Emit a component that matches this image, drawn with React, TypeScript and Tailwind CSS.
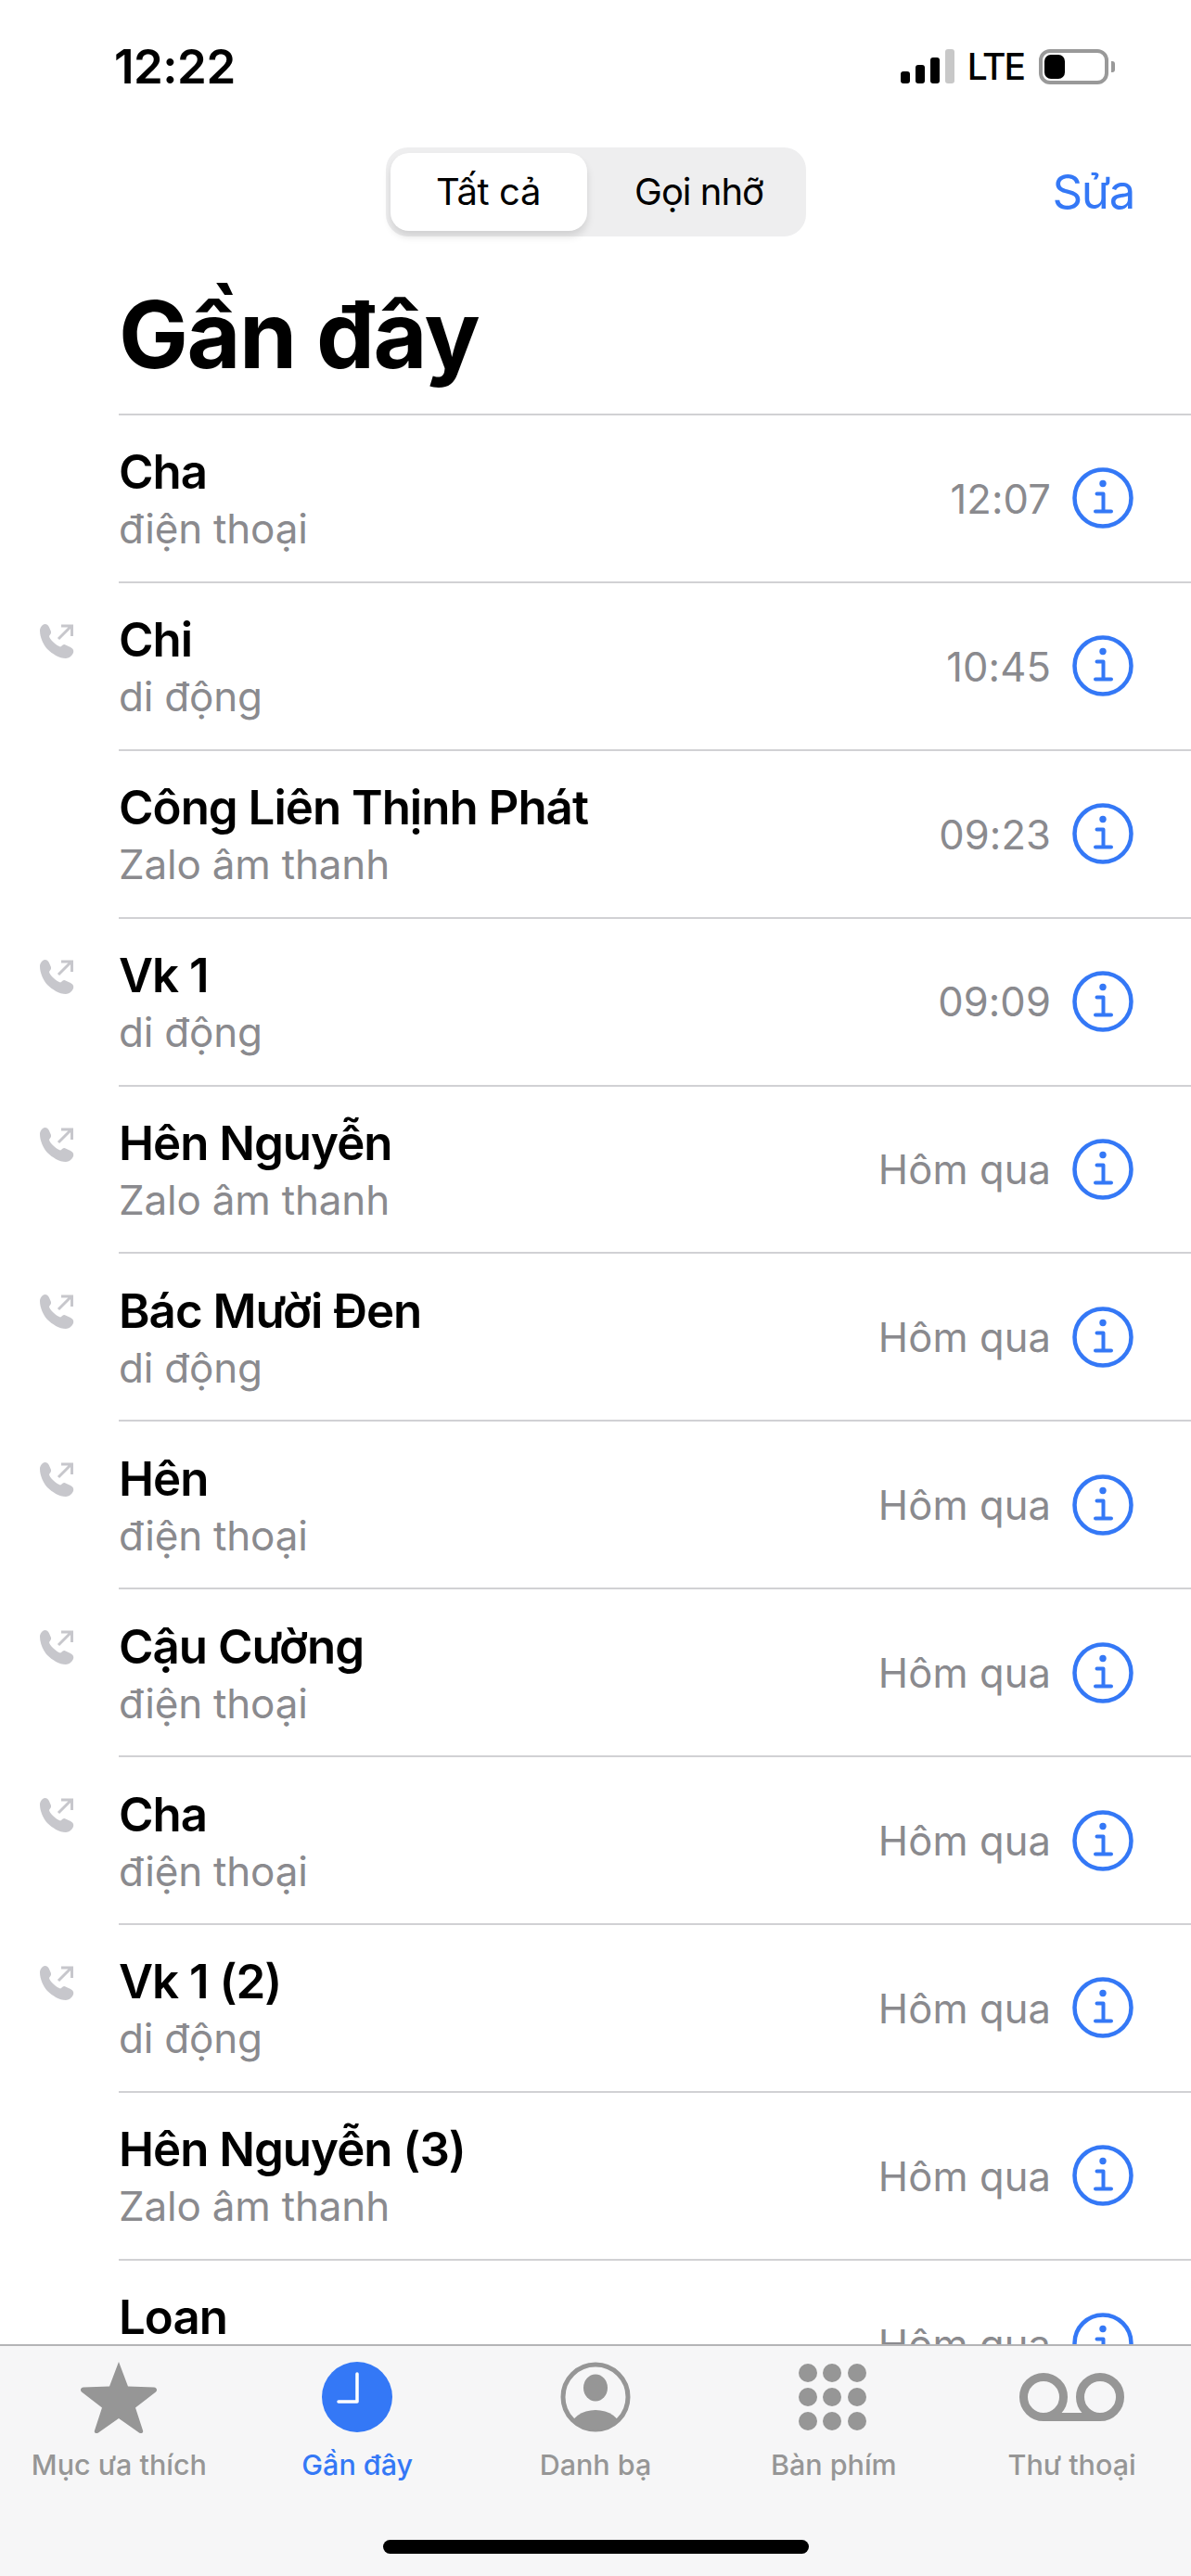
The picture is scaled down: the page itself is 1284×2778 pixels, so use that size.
import React from 'react';

const calls = [
  { name: 'Cha', type: 'điện thoại', when: '12:07', out: false },
  { name: 'Chi', type: 'di động', when: '10:45', out: true },
  { name: 'Công Liên Thịnh Phát', type: 'Zalo âm thanh', when: '09:23', out: false },
  { name: 'Vk 1', type: 'di động', when: '09:09', out: true },
  { name: 'Hên Nguyễn', type: 'Zalo âm thanh', when: 'Hôm qua', out: true },
  { name: 'Bác Mười Đen', type: 'di động', when: 'Hôm qua', out: true },
  { name: 'Hên', type: 'điện thoại', when: 'Hôm qua', out: true },
  { name: 'Cậu Cường', type: 'điện thoại', when: 'Hôm qua', out: true },
  { name: 'Cha', type: 'điện thoại', when: 'Hôm qua', out: true },
  { name: 'Vk 1 (2)', type: 'di động', when: 'Hôm qua', out: true },
  { name: 'Hên Nguyễn (3)', type: 'Zalo âm thanh', when: 'Hôm qua', out: false },
  { name: 'Loan', type: 'di động', when: 'Hôm qua', out: false },
];

function OutgoingIcon() {
  return (
    <svg width="38" height="38" viewBox="0 0 38 38" fill="none">
      <path
        d="M1 8C1 5 3.500 1 6.500 1C8.500 1 9.800 2 10.800 4L13 9C13.500 11 12 12.500 11 14C11 15.500 13 18 15.500 20.500C18 23 21 25 23 25.500C24.500 25 25.500 23 27.500 23L33 25.500C36 27 38 28.500 37 32C36 35 32 38 29 38C22 38 14 33 9 28C4.500 23 1 15 1 8Z"
        fill="#c7c7cc"
      />
      <path d="M21 17L35 3M24 3H35.500V14" stroke="#c7c7cc" strokeWidth="3" />
    </svg>
  );
}

function InfoIcon() {
  return (
    <svg width="66" height="66" viewBox="0 0 66 66" fill="none" className="shrink-0">
      <circle cx="33" cy="33" r="30.500" stroke="#3478f6" strokeWidth="4.500" />
      <circle cx="33" cy="17.500" r="3.700" fill="#3478f6" />
      <path d="M26.500 28.500H33.500V47.500M25 47.500H42" stroke="#3478f6" strokeWidth="4" strokeLinecap="round" strokeLinejoin="round" />
    </svg>
  );
}

function StarIcon() {
  return (
    <svg width="84" height="78" viewBox="0 0 84 78">
      <path
        d="M42 1L52 27.500L80 28.500C83 28.800 84 31.500 82 33.500L60 50.500L68 75C69 78 66 79 64 77.500L42 62L20 77.500C18 79 15 78 16 75L24 50.500L2 33.500C0 31.500 1 28.800 4 28.500L32 27.500Z"
        fill="#969696"
      />
    </svg>
  );
}

function ClockIcon() {
  return (
    <svg width="76" height="76" viewBox="0 0 76 76">
      <circle cx="38" cy="38" r="38" fill="#3478f6" />
      <path d="M38 13V43H18" fill="none" stroke="#fff" strokeWidth="3.500" strokeLinejoin="round" strokeLinecap="round" />
    </svg>
  );
}

function ContactIcon() {
  return (
    <svg width="76" height="76" viewBox="0 0 76 76">
      <defs>
        <clipPath id="contact-clip">
          <circle cx="38" cy="38" r="36" />
        </clipPath>
      </defs>
      <circle cx="38" cy="38" r="35" fill="none" stroke="#969696" strokeWidth="5" />
      <ellipse cx="38" cy="28" rx="13" ry="14.500" fill="#969696" />
      <ellipse cx="38" cy="72" rx="27" ry="20" fill="#969696" clipPath="url(#contact-clip)" />
    </svg>
  );
}

function KeypadIcon() {
  return (
    <div className="grid grid-cols-3 gap-[6px] w-[74px] -ml-[2px]">
      {Array.from({ length: 9 }, (_, i) => (
        <div key={i} className="w-[20px] h-[20px] rounded-full bg-[#969696]" />
      ))}
    </div>
  );
}

function VoicemailIcon() {
  return (
    <svg width="113" height="52" viewBox="0 0 113 52" fill="none">
      <circle cx="26" cy="26" r="21.500" stroke="#969696" strokeWidth="9" />
      <circle cx="87" cy="26" r="21.500" stroke="#969696" strokeWidth="9" />
      <path d="M26 47.500H87" stroke="#969696" strokeWidth="9" />
    </svg>
  );
}

function CallRow({ name, type, when, out }: { name: string; type: string; when: string; out: boolean }) {
  return (
    <div className="flex h-[180.9px] shrink-0">
      <div className="w-[128px] shrink-0 pl-[42px] pt-[45px]">{out && <OutgoingIcon />}</div>
      <div className="flex-1 flex items-center border-t-2 border-[#d1d1d4] pr-[62px]">
        <div className="flex-1 min-w-0 pt-[4px]">
          <p className="text-[51px] leading-[62px] font-semibold text-black tracking-[-1px] whitespace-nowrap">{name}</p>
          <p className="text-[44px] leading-[60px] text-[#8a8a8e] tracking-[-0.2px] whitespace-nowrap">{type}</p>
        </div>
        <span className="text-[43.5px] pt-[2px] text-[#8a8a8e] tracking-[0.1px] mr-[23px] whitespace-nowrap">{when}</span>
        <InfoIcon />
      </div>
    </div>
  );
}

function TabItem({ label, icon, active }: { label: string; icon: React.ReactNode; active?: boolean }) {
  return (
    <div className="flex flex-col items-center">
      <div className="h-[78px] flex items-center justify-center">{icon}</div>
      <span className={`mt-[14px] text-[30.5px] leading-[40px] font-medium whitespace-nowrap ${active ? 'text-[#3478f6]' : 'text-[#969696]'}`}>
        {label}
      </span>
    </div>
  );
}

export default function App() {
  return (
    <div className="w-[1284px] h-[2778px] flex flex-col overflow-hidden bg-white font-['Inter','Liberation_Sans',sans-serif]">
      {/* status bar */}
      <div className="h-[159px] shrink-0 flex justify-between pl-[123px] pr-[82px] pt-[42px]">
        <span className="text-[51px] leading-[60px] font-semibold text-black tracking-[-0.5px]">12:22</span>
        <div className="flex items-start pt-[11px]">
          <div className="flex items-end gap-[6px] h-[37px]">
            <div className="w-[10px] h-[13px] rounded-[3px] bg-black" />
            <div className="w-[10px] h-[20px] rounded-[3px] bg-black" />
            <div className="w-[10px] h-[28px] rounded-[3px] bg-black" />
            <div className="w-[10px] h-[37px] rounded-[3px] bg-[#c8c8c8]" />
          </div>
          <span className="ml-[14px] text-[39px] leading-[37px] font-medium text-black tracking-[-2px]">LTE</span>
          <div className="ml-[16px] w-[75px] h-[38px] rounded-[12px] border-[4px] border-[#999999] p-[2px]">
            <div className="w-[22px] h-full rounded-[7px] bg-black" />
          </div>
          <div className="ml-[3px] mt-[13px] w-[4px] h-[12px] rounded-r-[3px] bg-[#999999]" />
        </div>
      </div>

      {/* nav */}
      <div className="h-[96px] shrink-0 grid grid-cols-[1fr_453px_1fr] items-center">
        <div />
        <div className="h-[96px] rounded-[24px] bg-[#eeeeef] pl-[5px] py-[6px] pr-[6px] flex">
          <div className="w-[212px] rounded-[20px] bg-white shadow-[0_6px_8px_rgba(0,0,0,0.12)] flex items-center justify-center text-[40px] text-black tracking-[-0.4px]">
            Tất cả
          </div>
          <div className="flex-1 flex items-center justify-center pl-[12px] text-[40px] text-black tracking-[-1px]">
            Gọi nhỡ
          </div>
        </div>
        <div className="flex justify-end pr-[61px]">
          <span className="text-[51px] leading-[60px] text-[#3478f6] tracking-[-1.5px]">Sửa</span>
        </div>
      </div>

      {/* title */}
      <div className="h-[191px] shrink-0 pl-[128px] pt-[46px]">
        <h1 className="text-[100px] leading-[120px] font-bold text-black tracking-[-1.5px]">Gần đây</h1>
      </div>

      <div className="flex-1 min-h-0 overflow-hidden flex flex-col">
        {calls.map((c, i) => (
          <CallRow key={i} name={c.name} type={c.type} when={c.when} out={c.out} />
        ))}
      </div>

      {/* tab bar */}
      <div className="h-[250px] shrink-0 flex flex-col bg-[#f6f6f7] border-t-2 border-[#b4b4b6]">
        <div className="grid grid-cols-5 pt-[16px]">
          <TabItem label="Mục ưa thích" icon={<StarIcon />} />
          <TabItem label="Gần đây" icon={<ClockIcon />} active />
          <TabItem label="Danh bạ" icon={<ContactIcon />} />
          <TabItem label="Bàn phím" icon={<KeypadIcon />} />
          <TabItem label="Thư thoại" icon={<VoicemailIcon />} />
        </div>
        <div className="mt-auto mb-[24px] mx-auto w-[459px] h-[15px] rounded-full bg-black" />
      </div>
    </div>
  );
}
